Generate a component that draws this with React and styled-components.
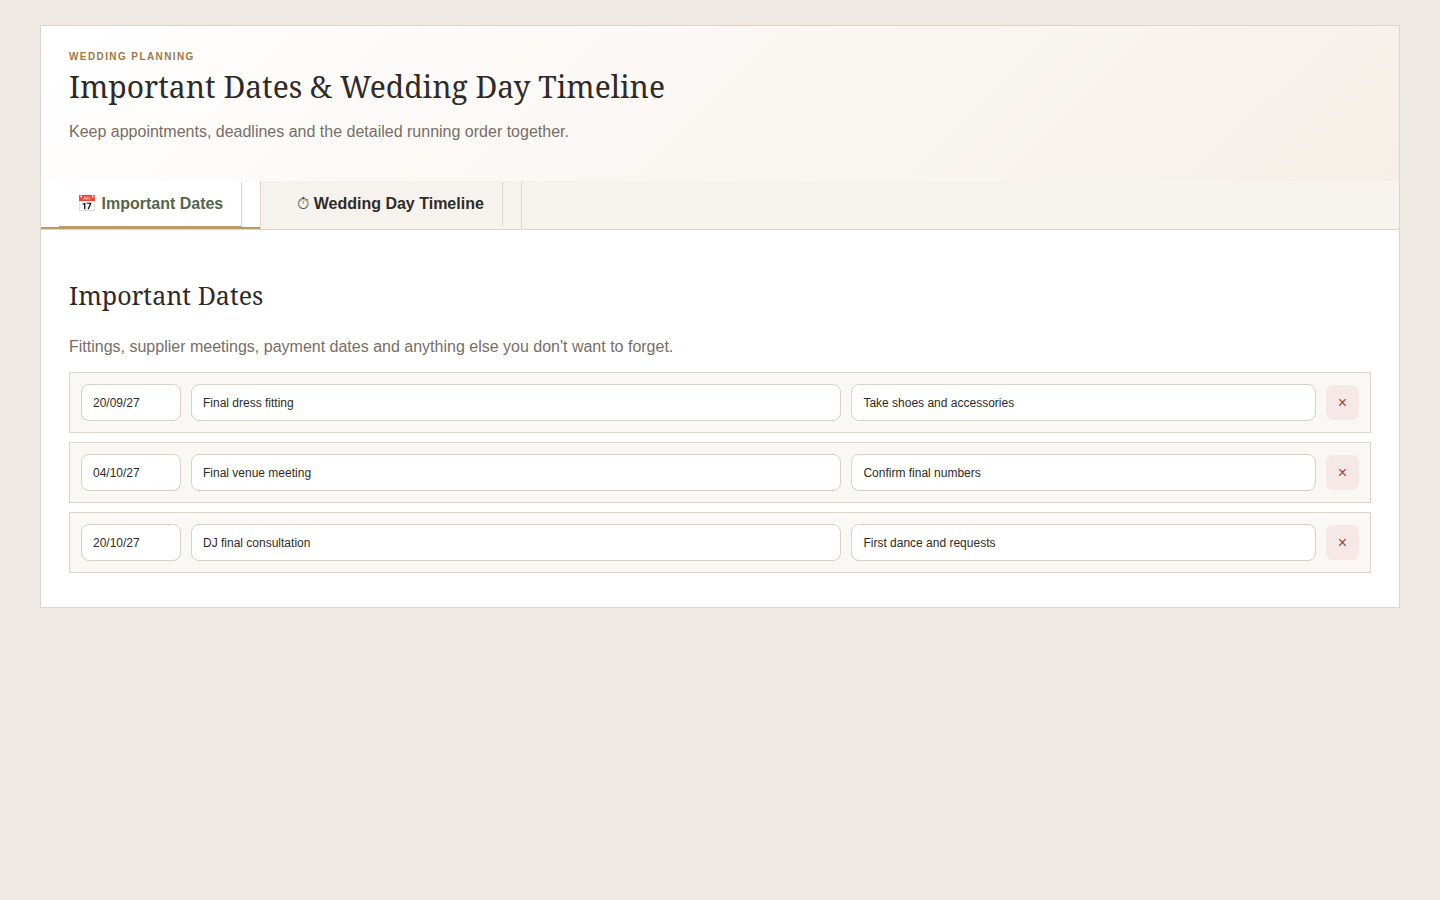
import { useState } from "react"
import styled, { createGlobalStyle } from "styled-components"

const GlobalStyle = createGlobalStyle`
    * {
        box-sizing: border-box;
    }
    body {
        margin: 0;
        background: #eee9e2;
        color: #2f2a26;
        font-family: Arial, "Liberation Sans", sans-serif;
        font-size: 16px;
    }
`
const Page = styled.div`
    padding: 25px 40px;
`
const Card = styled.main`
    background: #fff;
    border: 1px solid #ddd4ca;
`
const Header = styled.header`
    padding: 25px 28px 37px;
    background: linear-gradient(135deg, #fff, #f5efe7);
`
const Eyebrow = styled.div`
    color: #9b7a45;
    font-size: 10px;
    font-weight: 700;
    line-height: 12px;
    letter-spacing: 0.14em;
    text-transform: uppercase;
`
const Title = styled.h1`
    margin: 4px 0 13px;
    font-family: Georgia, "Noto Serif", serif;
    font-size: 30px;
    font-weight: 400;
    line-height: 40px;
`
const Lead = styled.p`
    margin: 0;
    color: #776e66;
    line-height: 24px;
`
const TabBar = styled.div`
    display: flex;
    background: #f6f3ee;
    border-bottom: 1px solid #ddd4ca;
`
const TabCell = styled.div`
    padding: 1px 18px 0;
    border-right: 1px solid #ddd4ca;
    background: ${({ $active }) => ($active ? "#fff" : "transparent")};
    box-shadow: ${({ $active }) => ($active ? "inset 0 -2px #b99b68" : "none")};
`
const Tab = styled.button`
    display: block;
    height: 45px;
    margin-bottom: 2px;
    padding: 0 18px;
    border: 0;
    border-right: 1px solid #ddd4ca;
    border-bottom: 1px solid ${({ $active }) => ($active ? "#b99b68" : "transparent")};
    background: transparent;
    color: ${({ $active }) => ($active ? "#53664e" : "#2f2a26")};
    font: inherit;
    font-weight: 700;
    line-height: 18px;
    white-space: nowrap;
    cursor: pointer;
`
const TabIcon = styled.span`
    color: #5f5955;
    font-weight: 400;
`
const Panel = styled.section`
    padding: 47px 28px 34px;
`
const PanelTitle = styled.h2`
    margin: 0 0 22px;
    font-family: Georgia, "Noto Serif", serif;
    font-size: 25px;
    font-weight: 400;
    line-height: 36px;
`
const PanelText = styled(Lead)`
    margin-bottom: 13px;
`
const Rows = styled.div`
    display: grid;
    gap: 9px;
`
const Row = styled.div`
    display: grid;
    grid-template-columns: 100px 1.4fr 1fr 33px;
    align-items: center;
    gap: 10px;
    padding: 11px;
    background: #faf8f4;
    border: 1px solid #ddd4ca;
`
const Field = styled.input`
    width: 100%;
    min-width: 0;
    height: 37px;
    padding: 0 11px;
    border: 1px solid #d9d0c7;
    border-radius: 8px;
    background: #fff;
    color: #2f2a26;
    font: inherit;
    font-size: 12px;
`
const DeleteButton = styled.button`
    height: 35px;
    padding: 0;
    border: 0;
    border-radius: 7px;
    background: #f6e8e7;
    color: #a14440;
    font: inherit;
    cursor: pointer;
`

const tabs = [
    { id: "dates", icon: "📅", label: "Important Dates" },
    { id: "timeline", icon: "⏱", label: "Wedding Day Timeline" },
]

const initialDates = [
    { id: 1, date: "20/09/27", title: "Final dress fitting", notes: "Take shoes and accessories" },
    { id: 2, date: "04/10/27", title: "Final venue meeting", notes: "Confirm final numbers" },
    { id: 3, date: "20/10/27", title: "DJ final consultation", notes: "First dance and requests" },
]

const App = () => {
    const [active, setActive] = useState("dates")
    const [dates, setDates] = useState(initialDates)

    const update = (id, key, value) =>
        setDates(dates.map((d) => (d.id === id ? { ...d, [key]: value } : d)))
    const remove = (id) => setDates(dates.filter((d) => d.id !== id))

    return (
        <Page>
            <GlobalStyle />
            <Card>
                <Header>
                    <Eyebrow>Wedding planning</Eyebrow>
                    <Title>Important Dates &amp; Wedding Day Timeline</Title>
                    <Lead>Keep appointments, deadlines and the detailed running order together.</Lead>
                </Header>
                <TabBar role="tablist">
                    {tabs.map((tab) => (
                        <TabCell key={tab.id} role="presentation" $active={tab.id === active}>
                            <Tab
                                type="button"
                                role="tab"
                                aria-selected={tab.id === active}
                                $active={tab.id === active}
                                onClick={() => setActive(tab.id)}
                            >
                                <TabIcon>{tab.icon}</TabIcon> {tab.label}
                            </Tab>
                        </TabCell>
                    ))}
                </TabBar>
                {active === "dates" && (
                    <Panel role="tabpanel">
                        <PanelTitle>Important Dates</PanelTitle>
                        <PanelText>
                            Fittings, supplier meetings, payment dates and anything else you don't want to forget.
                        </PanelText>
                        <Rows>
                            {dates.map((d) => (
                                <Row key={d.id}>
                                    <Field
                                        aria-label="Date"
                                        value={d.date}
                                        onChange={(e) => update(d.id, "date", e.target.value)}
                                    />
                                    <Field
                                        aria-label="Title"
                                        value={d.title}
                                        onChange={(e) => update(d.id, "title", e.target.value)}
                                    />
                                    <Field
                                        aria-label="Notes"
                                        value={d.notes}
                                        onChange={(e) => update(d.id, "notes", e.target.value)}
                                    />
                                    <DeleteButton type="button" aria-label="Delete" onClick={() => remove(d.id)}>
                                        ×
                                    </DeleteButton>
                                </Row>
                            ))}
                        </Rows>
                    </Panel>
                )}
            </Card>
        </Page>
    )
}

export default App
